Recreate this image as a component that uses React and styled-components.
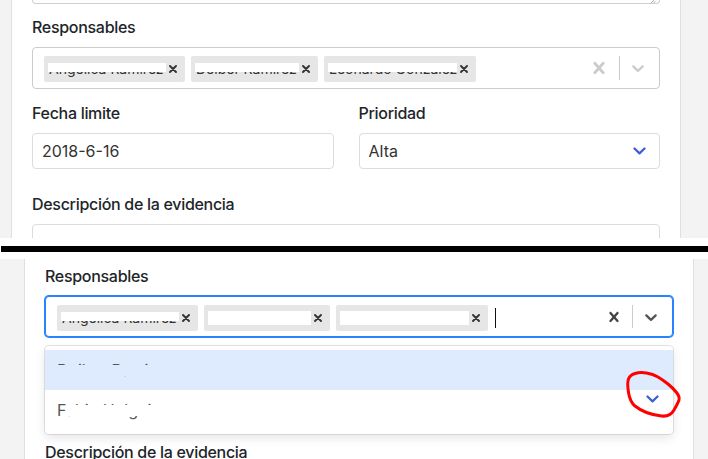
import React from 'react';
import styled, { createGlobalStyle } from 'styled-components';

const Global = createGlobalStyle`
  *, *::before, *::after { box-sizing: border-box; }
  html, body { margin: 0; padding: 0; background: #fff; }
  body { font-family: Inter, "Noto Sans", sans-serif; width: 708px; height: 459px; overflow: hidden; }
`;

const Composite = styled.div`
  position: relative;
  display: flex;
  flex-direction: column;
  width: 708px;
  height: 459px;
  background: #fff;
  overflow: hidden;
`;

const Shot = styled.div`
  position: relative;
  display: flex;
  flex: 0 0 ${p => p.$h}px;
  height: ${p => p.$h}px;
  overflow: hidden;
`;

const Gap = styled.div`
  flex: 0 0 ${p => p.$h}px;
  background: #fff;
`;

const Divider = styled.div`
  flex: 0 0 6px;
  margin-left: 1px;
  background: #000;
`;

const Rail = styled.div`
  flex: 0 0 ${p => p.$w}px;
  background: #f3f3f3;
  ${p => (p.$side === 'left' ? 'border-right: 1px solid #e0e0e0;' : 'border-left: 1px solid #e0e0e0;')}
`;

const Panel = styled.div`
  flex: 1;
  min-width: 0;
  display: block;
  background: #fff;
  padding: ${p => p.$top}px 20px 0 20px;
`;

const TextareaTail = styled.div`
  position: relative;
  height: 4px;
  border: 1px solid #cfcfcf;
  border-top: none;
  border-radius: 0 0 4px 4px;
`;

const Grip = styled.svg`
  position: absolute;
  right: 3px;
  bottom: 0;
`;

const Group = styled.div`
  position: relative;
  margin-top: ${p => p.$mt || 0}px;
`;

const Row = styled.div`
  display: grid;
  grid-template-columns: 1fr 1fr;
  column-gap: 25px;
  margin-top: ${p => p.$mt || 0}px;
`;

const Label = styled.div`
  font-size: 16px;
  font-weight: 500;
  line-height: 24px;
  letter-spacing: -0.3px;
  color: #212529;
  margin-bottom: 8px;
  white-space: nowrap;
`;

const MultiControl = styled.div`
  display: flex;
  align-items: center;
  min-height: 41px;
  background: #fff;
  border: 1px solid ${p => (p.$focused ? '#2684ff' : '#cccccc')};
  box-shadow: ${p => (p.$focused ? '0 0 0 1px #2684ff' : 'none')};
  border-radius: 4px;
`;

const Values = styled.div`
  flex: 1;
  display: flex;
  align-items: center;
  flex-wrap: wrap;
  padding: 4px 8px 2px;
`;

const Chip = styled.div`
  display: flex;
  align-items: center;
  height: 26px;
  margin: 3px;
  background: #e6e6e6;
  border-radius: 2px;
`;

const ChipLabel = styled.span`
  position: relative;
  display: block;
  flex: 0 0 auto;
  width: ${p => p.$w + 5}px;
  padding-left: 5px;
  font-size: 14px;
  line-height: 20px;
  color: #333;
  white-space: nowrap;
  overflow: hidden;
  &::after {
    content: '';
    position: absolute;
    left: 4px;
    right: 0;
    top: ${p => (p.$cover === 'full' ? 3 : 4)}px;
    bottom: ${p => (p.$cover === 'full' ? 3 : 7)}px;
    background: #fff;
  }
`;

const ChipRemove = styled.span`
  display: flex;
  align-items: center;
  padding: 0 8px 0 3px;
  color: #333;
`;

const Caret = styled.span`
  display: block;
  width: 1px;
  height: 20px;
  margin-left: 4px;
  background: #111;
`;

const Indicators = styled.div`
  align-self: stretch;
  display: flex;
  align-items: center;
  margin-right: 3px;
`;

const Indicator = styled.span`
  display: flex;
  padding: 8px;
  color: ${p => p.$color};
`;

const Separator = styled.span`
  align-self: stretch;
  width: 1px;
  margin: 8px 0;
  background: #cccccc;
`;

const Field = styled.div`
  display: flex;
  align-items: center;
  justify-content: space-between;
  height: 36px;
  padding: 0 13px 0 9px;
  background: #fff;
  border: 1px solid #dcdcdc;
  border-radius: 4px;
  font-size: 16px;
  color: #333;
`;

const SelectArrow = styled.svg`
  position: relative;
  z-index: 2;
  display: block;
`;

const Menu = styled.div`
  position: absolute;
  z-index: 1;
  top: calc(100% + 9px);
  left: 0;
  right: 0;
  padding: 4px 0;
  background: #fff;
  border-radius: 4px;
  box-shadow: 0 0 0 1px rgba(0, 0, 0, 0.1), 0 4px 11px rgba(0, 0, 0, 0.1);
`;

const Option = styled.div`
  display: flex;
  align-items: center;
  height: 40px;
  padding: 0 12px;
  background: ${p => (p.$active ? '#deebff' : '#fff')};
`;

const OptionText = styled.span`
  position: relative;
  font-size: 16px;
  line-height: 20px;
  color: #555;
  &::after {
    content: '';
    position: absolute;
    left: ${p => p.$from}px;
    right: 0;
    top: 5px;
    bottom: 4px;
    background: ${p => (p.$active ? '#deebff' : '#fff')};
  }
`;

const Annotation = styled.svg`
  position: absolute;
  z-index: 5;
  left: 620px;
  top: 365px;
  pointer-events: none;
`;

const crossPath =
  'M14.348 14.849c-0.469 0.469-1.229 0.469-1.697 0l-2.651-3.030-2.651 3.029c-0.469 0.469-1.229 0.469-1.697 0-0.469-0.469-0.469-1.229 0-1.697l2.758-3.150-2.759-3.152c-0.469-0.469-0.469-1.228 0-1.697s1.228-0.469 1.697 0l2.652 3.031 2.651-3.031c0.469-0.469 1.228-0.469 1.697 0s0.469 1.229 0 1.697l-2.758 3.152 2.758 3.150c0.469 0.469 0.469 1.229 0 1.698z';
const chevronPath =
  'M4.516 7.548c0.436-0.446 1.043-0.481 1.576 0l3.908 3.747 3.908-3.747c0.533-0.481 1.141-0.446 1.574 0 0.436 0.445 0.408 1.197 0 1.615-0.406 0.418-4.695 4.502-4.695 4.502-0.217 0.223-0.502 0.335-0.787 0.335s-0.57-0.112-0.789-0.335c0 0-4.287-4.084-4.695-4.502s-0.436-1.17 0-1.615z';

const Cross = ({ size = 20 }) => (
  <svg width={size} height={size} viewBox="0 0 20 20" fill="currentColor">
    <path d={crossPath} />
  </svg>
);

const Chevron = ({ size = 20 }) => (
  <svg width={size} height={size} viewBox="0 0 20 20" fill="currentColor">
    <path d={chevronPath} />
  </svg>
);

const SmallX = () => (
  <svg width="8" height="8" viewBox="0 0 8 8">
    <path d="M1 1L7 7M7 1L1 7" stroke="currentColor" strokeWidth="1.9" strokeLinecap="round" />
  </svg>
);

const MultiSelect = ({ chips, focused }) => (
  <MultiControl $focused={focused}>
    <Values>
      {chips.map(c => (
        <Chip key={c.name}>
          <ChipLabel $w={c.w} $cover={c.cover}>{c.name}</ChipLabel>
          <ChipRemove><SmallX /></ChipRemove>
        </Chip>
      ))}
      {focused && <Caret />}
    </Values>
    <Indicators>
      <Indicator $color={focused ? '#444' : '#cccccc'}><Cross size={focused ? 20 : 24} /></Indicator>
      <Separator />
      <Indicator $color={focused ? '#555' : '#cccccc'}><Chevron /></Indicator>
    </Indicators>
  </MultiControl>
);

const BlueArrow = () => (
  <SelectArrow width="13" height="8" viewBox="0 0 13 8">
    <path d="M1.5 1.5L6.5 6.3L11.5 1.5" fill="none" stroke="#3f5fd9" strokeWidth="2.3" strokeLinecap="round" strokeLinejoin="round" />
  </SelectArrow>
);

const Form = ({ chips, focused, top, tail, menu }) => (
  <Panel $top={top}>
    {tail && (
      <TextareaTail>
        <Grip width="6" height="4" viewBox="0 0 6 4">
          <path d="M1 4L5 0M3.5 4L5.5 2" stroke="#999" strokeWidth="0.8" />
        </Grip>
      </TextareaTail>
    )}
    <Group $mt={tail ? 11 : 0}>
      <Label>Responsables</Label>
      <MultiSelect chips={chips} focused={focused} />
      {menu && (
        <Menu>
          <Option $active>
            <OptionText $active $from={0}>Deiber Ramirez</OptionText>
          </Option>
          <Option>
            <OptionText $from={9}>Fabio Holguin</OptionText>
          </Option>
        </Menu>
      )}
    </Group>
    <Row $mt={12}>
      <div>
        <Label>Fecha limite</Label>
        <Field>2018-6-16</Field>
      </div>
      <div>
        <Label>Prioridad</Label>
        <Field>
          <span>Alta</span>
          <BlueArrow />
        </Field>
      </div>
    </Row>
    <Group $mt={23}>
      <Label>Descripción de la evidencia</Label>
      <Field />
    </Group>
  </Panel>
);

const topChips = [
  { name: 'Angelica Ramirez', w: 117, cover: 'bottom' },
  { name: 'Deiber Ramirez', w: 103, cover: 'bottom' },
  { name: 'Leonardo Gonzalez', w: 128, cover: 'bottom' },
];

const bottomChips = [
  { name: 'Angelica Ramirez', w: 117, cover: 'bottom' },
  { name: 'Deiber Ramirez', w: 102, cover: 'full' },
  { name: 'Leonardo Gonzalez', w: 128, cover: 'full' },
];

const loop = [
  [7, 18], [10, 37], [20, 45], [33, 50], [50, 52], [58, 38], [60, 32],
  [53, 23], [43, 15], [33, 9], [20, 7], [10, 10],
];

const smoothClosed = pts => {
  const mid = (a, b) => [(a[0] + b[0]) / 2, (a[1] + b[1]) / 2];
  const n = pts.length;
  const start = mid(pts[n - 1], pts[0]);
  let d = `M${start[0]} ${start[1]}`;
  for (let i = 0; i < n; i++) {
    const m = mid(pts[i], pts[(i + 1) % n]);
    d += ` Q${pts[i][0]} ${pts[i][1]} ${m[0]} ${m[1]}`;
  }
  return d + 'Z';
};

export default function App() {
  return (
    <>
      <Global />
      <Composite>
        <Shot $h={238}>
          <Rail $side="left" $w={12} />
          <Form chips={topChips} top={0} tail />
          <Rail $side="right" $w={28} />
        </Shot>
        <Gap $h={8} />
        <Divider />
        <Gap $h={7} />
        <Shot $h={200}>
          <Rail $side="left" $w={25} />
          <Form chips={bottomChips} focused top={5} menu />
          <Rail $side="right" $w={15} />
        </Shot>
        <Annotation width="70" height="60" viewBox="0 0 70 60">
          <path d={smoothClosed(loop)} fill="none" stroke="#ff0000" strokeWidth="3" strokeLinejoin="round" />
        </Annotation>
      </Composite>
    </>
  );
}
